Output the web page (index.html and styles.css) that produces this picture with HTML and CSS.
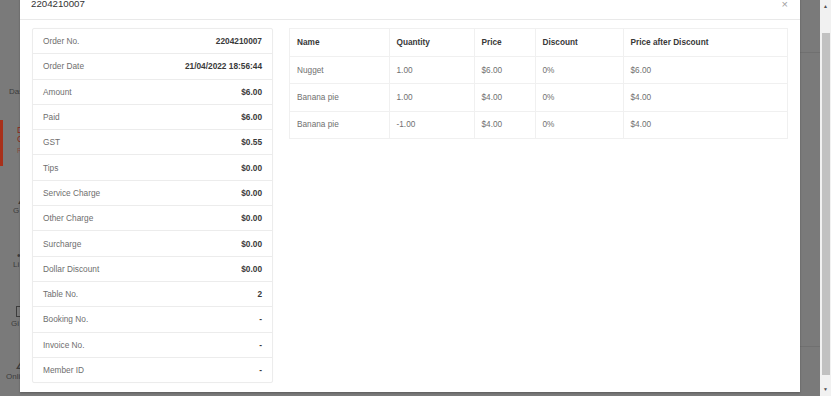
FILE: index.html
```html
<!DOCTYPE html>
<html>
<head>
<meta charset="utf-8">
<link rel="stylesheet" href="styles.css">
</head>
<body>
<div class="page">
  <nav class="sidebar">
    <div class="nav-item nav-dash">Das</div>
    <div class="nav-item nav-active">
      <span class="act-line">D</span>
      <span class="act-line">C</span>
      <span class="act-sub">R</span>
    </div>
    <div class="nav-item nav-g"><span class="ico">&#9650;</span><span>G</span></div>
    <div class="nav-item nav-l"><span class="ico">&#8226;</span><span>Li</span></div>
    <div class="nav-item nav-gi"><span class="ico ico-box"></span><span>Gi</span></div>
    <div class="nav-item nav-on"><span class="ico">&#8736;</span><span>Onli</span></div>
  </nav>
  <div class="rline rline-1"></div>
  <div class="rline rline-2"></div>
</div>

<div class="modal">
  <div class="modal-header">
    <span class="modal-title">2204210007</span>
    <span class="modal-close">&times;</span>
  </div>
  <div class="modal-body">
    <div class="info-card">
      <div class="info-row"><span class="lbl">Order No.</span><span class="val">2204210007</span></div>
      <div class="info-row"><span class="lbl">Order Date</span><span class="val">21/04/2022 18:56:44</span></div>
      <div class="info-row"><span class="lbl">Amount</span><span class="val">$6.00</span></div>
      <div class="info-row"><span class="lbl">Paid</span><span class="val">$6.00</span></div>
      <div class="info-row"><span class="lbl">GST</span><span class="val">$0.55</span></div>
      <div class="info-row"><span class="lbl">Tips</span><span class="val">$0.00</span></div>
      <div class="info-row"><span class="lbl">Service Charge</span><span class="val">$0.00</span></div>
      <div class="info-row"><span class="lbl">Other Charge</span><span class="val">$0.00</span></div>
      <div class="info-row"><span class="lbl">Surcharge</span><span class="val">$0.00</span></div>
      <div class="info-row"><span class="lbl">Dollar Discount</span><span class="val">$0.00</span></div>
      <div class="info-row"><span class="lbl">Table No.</span><span class="val">2</span></div>
      <div class="info-row"><span class="lbl">Booking No.</span><span class="val">-</span></div>
      <div class="info-row"><span class="lbl">Invoice No.</span><span class="val">-</span></div>
      <div class="info-row"><span class="lbl">Member ID</span><span class="val">-</span></div>
    </div>
    <table class="items">
      <colgroup>
        <col class="c-name"><col class="c-qty"><col class="c-price"><col class="c-disc"><col>
      </colgroup>
      <thead>
        <tr><th>Name</th><th>Quantity</th><th>Price</th><th>Discount</th><th>Price after Discount</th></tr>
      </thead>
      <tbody>
        <tr><td>Nugget</td><td>1.00</td><td>$6.00</td><td>0%</td><td>$6.00</td></tr>
        <tr><td>Banana pie</td><td>1.00</td><td>$4.00</td><td>0%</td><td>$4.00</td></tr>
        <tr><td>Banana pie</td><td>-1.00</td><td>$4.00</td><td>0%</td><td>$4.00</td></tr>
      </tbody>
    </table>
  </div>
</div>

<div class="scrollbar">
  <span class="sb-arrow sb-up">&#9650;</span>
  <div class="sb-thumb"></div>
  <span class="sb-arrow sb-down">&#9660;</span>
</div>
</body>
</html>
```

FILE: styles.css
```css
* { box-sizing: border-box; }

html, body {
  margin: 0;
  padding: 0;
  width: 831px;
  height: 396px;
  overflow: hidden;
}

body {
  background: #7a7a7a;
  font-family: "Liberation Sans", Arial, sans-serif;
  position: relative;
}

.page {
  width: 831px;
  height: 396px;
  position: relative;
}

.sidebar {
  width: 60px;
  height: 396px;
  position: relative;
  color: #3c3c3c;
  font-size: 8px;
}

.nav-item {
  position: absolute;
  left: 0;
  width: 40px;
  text-align: left;
}

.nav-dash { top: 87px; left: 9px; }

.nav-active {
  top: 120px;
  height: 46px;
  border-left: 3px solid #a8301a;
  padding: 6px 0 0 14px;
  color: #8e2a18;
  display: flex;
  flex-direction: column;
  line-height: 9px;
  font-size: 9px;
}
.act-sub { font-size: 7px; color: #8a4a40; margin-top: 3px; line-height: 8px; }

.nav-item .ico { display: block; font-size: 6px; line-height: 8px; padding-left: 4px; }
.nav-g { top: 198px; left: 13px; }
.nav-l { top: 252px; left: 13px; }
.nav-l .ico { font-size: 10px; }
.nav-gi { top: 306px; left: 11px; }
.ico-box { width: 6px; height: 11px; border: 1px solid #3c3c3c; margin-left: 5px; margin-bottom: 2px; }
.nav-on { top: 358px; left: 6px; }
.nav-on .ico { font-size: 12px; padding-left: 9px; line-height: 14px; }

.rline { position: absolute; left: 790px; width: 40px; height: 1px; background: #707070; }
.rline-1 { top: 52px; }
.rline-2 { top: 346px; }

.modal {
  position: absolute;
  left: 20px;
  top: -12px;
  width: 780px;
  height: 403.5px;
  background: #fff;
  box-shadow: 0 1px 2px rgba(0,0,0,0.25);
}

.modal-header {
  height: 32px;
  border-bottom: 1px solid #e9e9e9;
  display: flex;
  align-items: center;
  justify-content: space-between;
  padding: 0 12px 0 11px;
}

.modal-title {
  font-size: 9.7px;
  color: #333;
  margin-top: -1px;
}

.modal-close {
  font-size: 11px;
  color: #a0a0a0;
  margin-top: 0;
}

.modal-body {
  display: flex;
  align-items: flex-start;
  gap: 16px;
  padding: 8px 12px 0 12px;
}

.info-card {
  width: 241px;
  flex: none;
  border: 1px solid #ececec;
  border-radius: 2px;
  box-shadow: 0 0 1px rgba(0,0,0,0.04);
}

.info-row {
  height: 25.3px;
  display: flex;
  align-items: center;
  justify-content: space-between;
  padding: 0 10px 0 10px;
  border-bottom: 1px solid #ececec;
  font-size: 8.3px;
}
.info-row:last-child { border-bottom: none; height: 24.3px; }

.lbl { color: #6e6e6e; }
.val { color: #3a3a3a; font-weight: bold; }

.items {
  flex: 1;
  border-collapse: collapse;
  table-layout: fixed;
  font-size: 8.25px;
  border: 1px solid #f0f0f0;
}

.c-name { width: 99.5px; }
.c-qty { width: 85px; }
.c-price { width: 61px; }
.c-disc { width: 88px; }

.items th, .items td {
  border: 1px solid #f0f0f0;
  text-align: left;
  padding: 0 7px;
}

.items th {
  height: 28px;
  color: #383838;
  font-weight: bold;
}

.items td {
  height: 27.4px;
  color: #707070;
}

.scrollbar {
  position: absolute;
  left: 820px;
  top: 0;
  width: 11px;
  height: 396px;
  background: #f1f1f1;
}

.sb-thumb {
  position: absolute;
  left: 2px;
  top: 33px;
  width: 8px;
  height: 342px;
  background: #c1c1c1;
}

.sb-arrow {
  position: absolute;
  left: 3px;
  font-size: 5px;
  color: #505050;
  line-height: 5px;
}
.sb-up { top: 4px; }
.sb-down { top: 387px; }
```
